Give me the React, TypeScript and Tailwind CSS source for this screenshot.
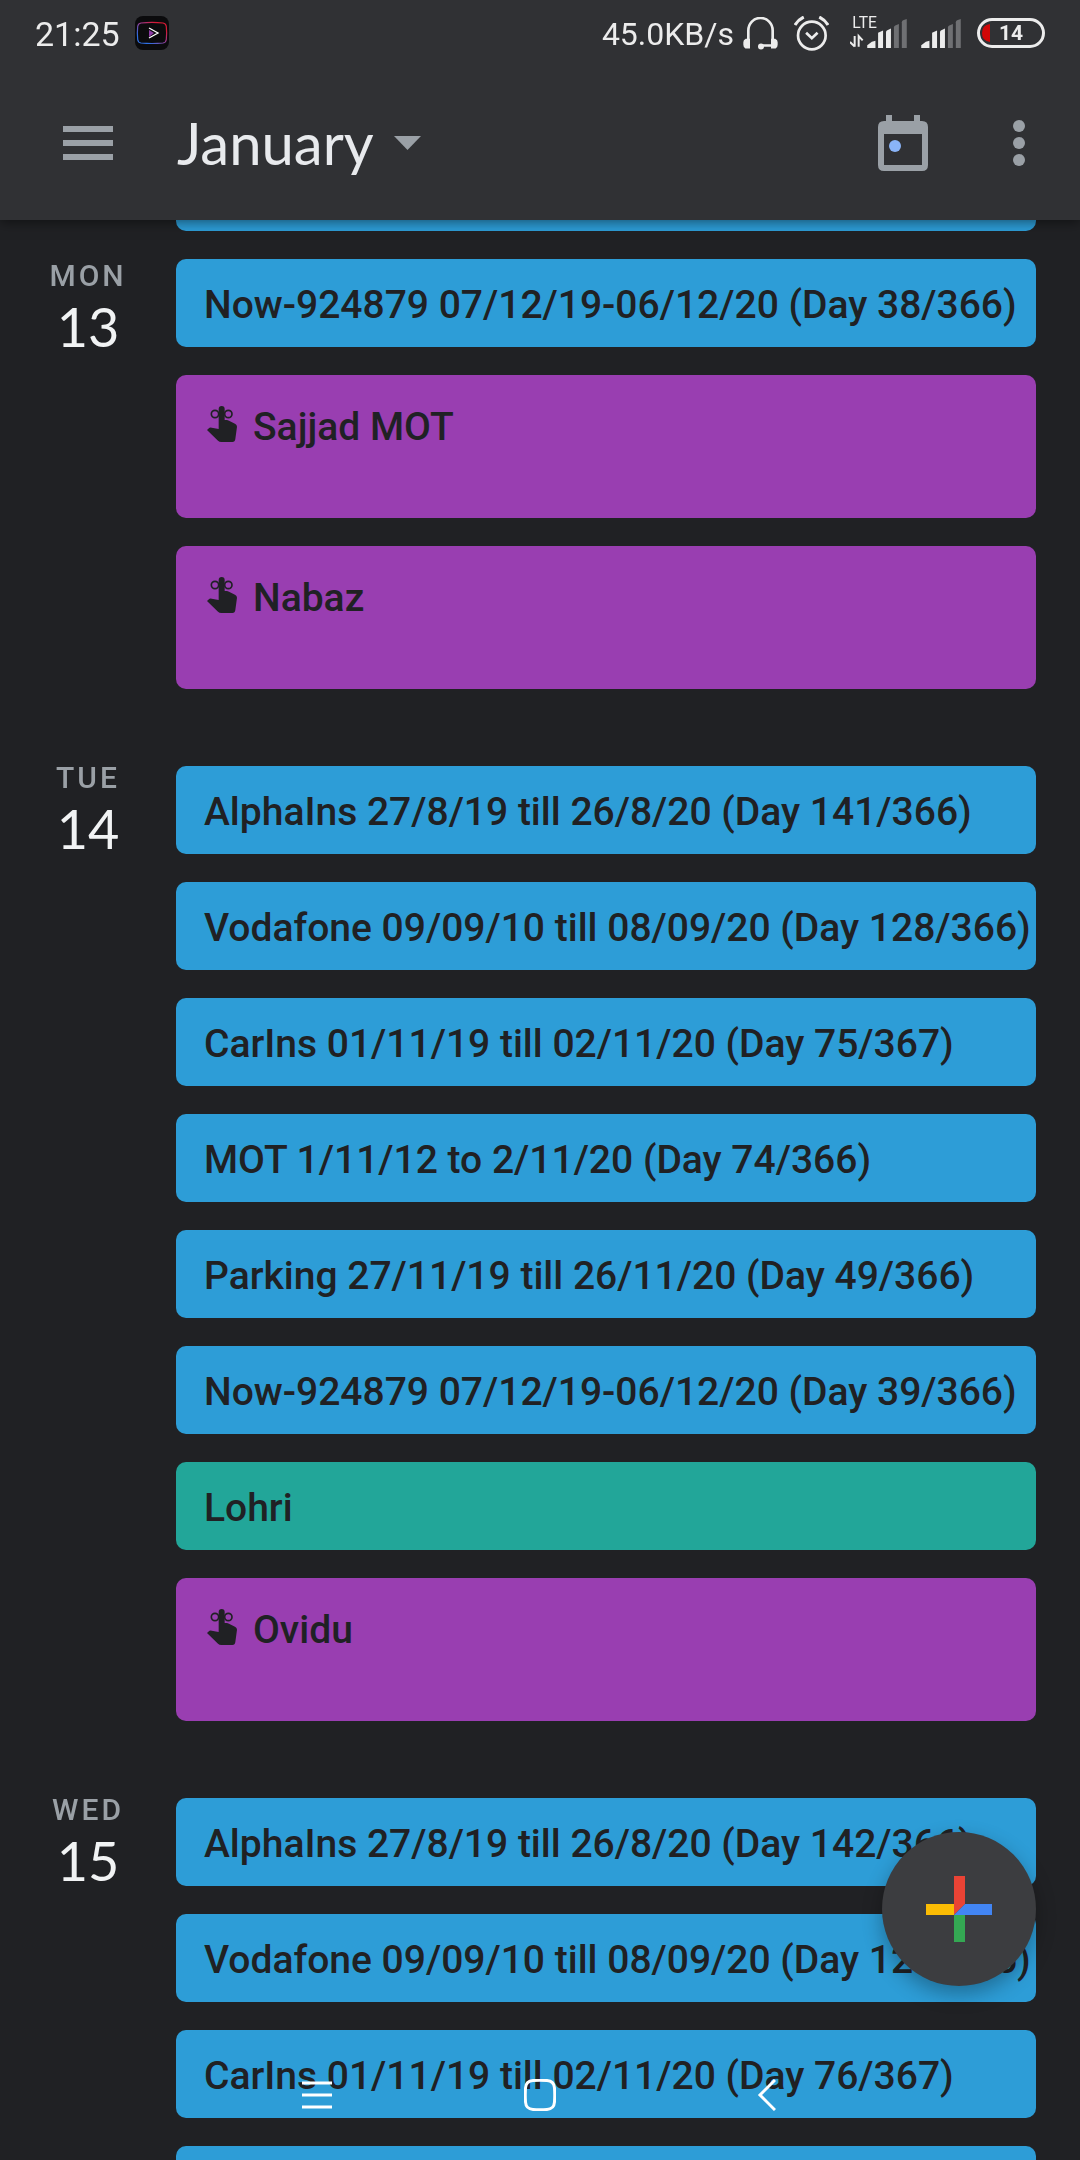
import React from 'react';
import clsx from 'clsx';

type EventKind = 'event' | 'holiday' | 'reminder';

interface CalendarEvent {
  title: string;
  kind: EventKind;
}

interface Day {
  weekday: string;
  date: number;
  events: CalendarEvent[];
}

const days: Day[] = [
  {
    weekday: 'MON',
    date: 13,
    events: [
      { title: 'Now-924879 07/12/19-06/12/20 (Day 38/366)', kind: 'event' },
      { title: 'Sajjad MOT', kind: 'reminder' },
      { title: 'Nabaz', kind: 'reminder' }
    ]
  },
  {
    weekday: 'TUE',
    date: 14,
    events: [
      { title: 'AlphaIns 27/8/19 till 26/8/20 (Day 141/366)', kind: 'event' },
      { title: 'Vodafone 09/09/10 till 08/09/20 (Day 128/366)', kind: 'event' },
      { title: 'CarIns 01/11/19 till 02/11/20 (Day 75/367)', kind: 'event' },
      { title: 'MOT 1/11/12 to 2/11/20 (Day 74/366)', kind: 'event' },
      { title: 'Parking 27/11/19 till 26/11/20 (Day 49/366)', kind: 'event' },
      { title: 'Now-924879 07/12/19-06/12/20 (Day 39/366)', kind: 'event' },
      { title: 'Lohri', kind: 'holiday' },
      { title: 'Ovidu', kind: 'reminder' }
    ]
  },
  {
    weekday: 'WED',
    date: 15,
    events: [
      { title: 'AlphaIns 27/8/19 till 26/8/20 (Day 142/366)', kind: 'event' },
      { title: 'Vodafone 09/09/10 till 08/09/20 (Day 129/366)', kind: 'event' },
      { title: 'CarIns 01/11/19 till 02/11/20 (Day 76/367)', kind: 'event' },
      { title: '', kind: 'event' }
    ]
  }
];

const kindStyles: Record<EventKind, string> = {
  event: 'bg-[#2d9dd7] h-[88px] pt-[22px]',
  holiday: 'bg-[#22a699] h-[88px] pt-[22px]',
  reminder: 'bg-[#993eb1] h-[143px] pt-7'
};

const ReminderIcon = () => (
  <svg viewBox="0 0 90 108" className="mt-[3px] ml-[3px] h-9 w-[30px] shrink-0" fill="currentColor" aria-hidden="true">
    <path d="M35 9a9 9 0 0 1 18 0v33h6q4 0 7 2l18 9q6 3 6 9l-5 37q-1 9-9 9H43q-6 0-10-4L0 72l4-4q4-4 10-3l21 4Z" />
    <circle cx="24" cy="24" r="11" fill="none" stroke="currentColor" strokeWidth="5" />
    <circle cx="64" cy="24" r="11" fill="none" stroke="currentColor" strokeWidth="5" />
  </svg>
);

const SignalBars = () => (
  <svg viewBox="0 0 120 88" className="h-[29px] w-10" fill="#ececec" aria-hidden="true">
    <path d="M0 88v-8l14-11 11-3v22z" />
    <path d="M33 88V42l15-7v53z" />
    <path d="M57 88V40q0-4 4-6l11-5v59z" />
    <path d="M81 88V26q0-4 4-6l11-5v73z" fill="#6f7073" />
    <path d="M105 88V10q0-4 4-6l11-4v88z" fill="#6f7073" />
  </svg>
);

const StatusBar = () => (
  <div className="flex h-[66px] items-center px-[35px] text-[#ececec]">
    <span className="pt-px text-[34px] leading-10">21:25</span>
    <svg viewBox="0 0 34 34" className="ml-[15px] size-[34px]" fill="none" aria-hidden="true">
      <defs>
        <linearGradient id="playerFrame" x1="0" y1="1" x2="1" y2="0">
          <stop offset="0.2" stopColor="#2f6fe4" />
          <stop offset="0.55" stopColor="#a03a8c" />
          <stop offset="0.8" stopColor="#d51a35" />
        </linearGradient>
      </defs>
      <rect width="34" height="34" rx="8" fill="#0b0b0d" />
      <path
        d="M6 7q11-1.200 22 0 3 .500 3.300 3.500.700 6.500 0 13-.300 3-3.300 3.500-11 1-22 0-3-.500-3.300-3.500-.700-6.500 0-13Q3 7.500 6 7z"
        stroke="url(#playerFrame)"
        strokeWidth="1.200"
      />
      <path d="M14 14v7l5-4z" fill="#8d3aa5" />
      <path d="m14 12 9 5-9 5" stroke="#fff" strokeWidth="1.300" />
    </svg>

    <span className="ml-auto pt-px text-[32px] leading-10">45.0KB/s</span>
    <svg viewBox="0 0 105 98" className="ml-[9px] h-[33px] w-[35px]" fill="none" stroke="#ececec" aria-hidden="true">
      <path d="M16 72V40a36 37 0 0 1 73 0v45H58" strokeWidth="8" />
      <path d="M9 70h7v19H9q-3-2-3-6v-8q0-4 3-5zM89 70h7q3 1 3 5v8q0 4-3 6h-7z" strokeWidth="10" />
      <circle cx="54" cy="88" r="9" fill="#ececec" stroke="none" />
    </svg>
    <svg viewBox="0 0 104 104" className="ml-4 size-[35px]" fill="none" stroke="#ececec" aria-hidden="true">
      <circle cx="53" cy="58" r="41" strokeWidth="8" />
      <path d="m36 50 17 16 17-16" strokeWidth="8" />
      <path d="M3 27q9-16 26-24M101 27Q92 11 75 3" strokeWidth="9" />
    </svg>
    <div className="relative ml-[38px]">
      <SignalBars />
      <svg viewBox="0 -12 96 108" className="absolute -top-[7px] -left-[17px] h-9 w-8" aria-hidden="true">
        <text x="7" y="37" fontSize="47" fill="#ececec">LTE</text>
        <path d="M14 60v32M0 78l14 14M26 92V60l12 13" stroke="#ececec" strokeWidth="6" fill="none" />
      </svg>
    </div>
    <div className="ml-[14px]">
      <SignalBars />
    </div>
    <div className="relative ml-4 flex h-[30px] w-[68px] items-center justify-center rounded-full border-[3px] border-[#ececec]">
      <svg viewBox="0 0 8 18" className="absolute left-[2px] h-[18px] w-2" aria-hidden="true">
        <path d="M8 0v18Q0 17 0 9t8-9z" fill="#d20707" />
      </svg>
      <span className="text-[21px] leading-6 font-bold">14</span>
    </div>
  </div>
);

const AppBar = () => (
  <div className="flex h-[154px] items-center pr-[49px] pl-[63px] text-[#9aa0a6]">
    <button type="button" aria-label="Open menu" className="flex w-[50px] flex-col gap-2">
      <span className="h-[6px] bg-current" />
      <span className="h-[6px] bg-current" />
      <span className="h-[6px] bg-current" />
    </button>
    <button type="button" className="ml-16 flex items-center gap-5">
      <span className="font-['Lato',sans-serif] text-[58px] leading-[64px] text-[#e8eaed]">January</span>
      <svg viewBox="0 0 27 14" className="h-[14px] w-[27px]" fill="currentColor" aria-hidden="true">
        <path d="M0 0h27L13.500 14z" />
      </svg>
    </button>
    <button type="button" aria-label="Go to today" className="ml-auto">
      <svg viewBox="0 0 50 56" className="h-14 w-[50px]" aria-hidden="true">
        <path
          d="M8 0h6v6h22V0h6v6h2q6 0 6 6v38q0 6-6 6H6q-6 0-6-6V12q0-6 6-6h2zM6 19v31h38V19z"
          fill="currentColor"
          fillRule="evenodd"
        />
        <circle cx="17" cy="31" r="6" fill="#8ab4f8" />
      </svg>
    </button>
    <button type="button" aria-label="More options" className="ml-[79px] flex w-6 flex-col items-center gap-[5px]">
      <span className="size-3 rounded-full bg-current" />
      <span className="size-3 rounded-full bg-current" />
      <span className="size-3 rounded-full bg-current" />
    </button>
  </div>
);

const EventCard: React.FC<CalendarEvent> = ({ title, kind }) => (
  <li
    className={clsx(
      'flex items-start gap-4 overflow-hidden rounded-[10px] pl-7 text-[39px] leading-[48px] font-medium whitespace-nowrap text-[#202124]',
      kindStyles[kind]
    )}
  >
    {kind === 'reminder' && <ReminderIcon />}
    <span>{title}</span>
  </li>
);

const DaySection: React.FC<Day> = ({ weekday, date, events }) => (
  <section className="flex pr-11">
    <h2 className="sticky top-[38px] -mt-[6px] flex w-44 shrink-0 flex-col items-center gap-px self-start font-normal">
      <span className="text-[30px] leading-9 font-medium tracking-widest text-[#9aa0a6]">{weekday}</span>
      <span className="font-['Lato',sans-serif] text-[54px] leading-[64px] text-[#f1f3f4]">{date}</span>
    </h2>
    <ul className="flex min-w-0 flex-1 flex-col gap-7">
      {events.map((event, index) => (
        <EventCard key={index} {...event} />
      ))}
    </ul>
  </section>
);

const NavigationBar = () => (
  <nav className="fixed inset-x-0 bottom-0 grid h-[130px] grid-cols-3 place-items-center px-[19%] text-white">
    <button type="button" aria-label="Recent apps">
      <svg viewBox="0 0 30 32" className="h-8 w-[30px]" stroke="currentColor" strokeWidth="3" aria-hidden="true">
        <path d="M0 4h30M0 16h30M0 28h30" />
      </svg>
    </button>
    <button type="button" aria-label="Home">
      <svg viewBox="0 0 32 32" className="size-8" fill="none" stroke="currentColor" strokeWidth="3" aria-hidden="true">
        <path d="M9 1.500Q16 1 23 1.500 30 2 30.500 9 31 16 30.500 23 30 30 23 30.500 16 31 9 30.500 2 30 1.500 23 1 16 1.500 9 2 2 9 1.500z" />
      </svg>
    </button>
    <button type="button" aria-label="Back">
      <svg viewBox="0 0 26 32" className="h-8 w-[26px]" fill="none" stroke="currentColor" strokeWidth="3" aria-hidden="true">
        <path d="M25 1 10 16l15 15" />
      </svg>
    </button>
  </nav>
);

const App: React.FC = () => {
  return (
    <div className="flex h-screen flex-col overflow-hidden bg-[#202124] font-['Roboto',sans-serif]">
      <header className="relative z-10 bg-[#303134] shadow-[0_2px_12px_rgba(0,0,0,0.5)]">
        <StatusBar />
        <AppBar />
      </header>

      <main className="min-h-0 flex-1 overflow-hidden">
        {/* tail of the previous event, scrolled under the header */}
        <div className="mr-11 mb-7 ml-44 h-[11px] rounded-b-[10px] bg-[#2d9dd7]" />
        <div className="flex flex-col gap-[77px]">
          {days.map((day) => (
            <DaySection key={day.date} {...day} />
          ))}
        </div>
      </main>

      <button
        type="button"
        aria-label="Create event"
        className="fixed right-11 bottom-[174px] flex size-[154px] items-center justify-center rounded-full bg-[#3c3d40] shadow-[0_8px_20px_rgba(0,0,0,0.3)]"
      >
        <svg viewBox="0 0 66 66" className="size-[66px]" aria-hidden="true">
          <path d="M28 0h11v28L28 39z" fill="#ea4335" />
          <path d="M0 28h28v11H0z" fill="#fbbc04" />
          <path d="M28 39h11v27H28z" fill="#34a853" />
          <path d="M39 28h27v11H28z" fill="#4285f4" />
        </svg>
      </button>

      <NavigationBar />
    </div>
  );
};

export default App;
